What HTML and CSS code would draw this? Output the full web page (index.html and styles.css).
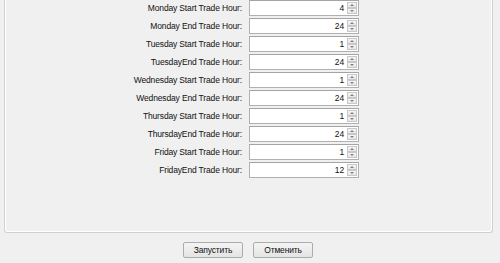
FILE: index.html
```html
<!DOCTYPE html>
<html lang="en">
<head>
  <meta charset="UTF-8">
  <title>Trade Hours</title>
  <link rel="stylesheet" href="styles.css">
</head>
<body>
  <div class="group">
    <div class="rows">
      <label>Monday Start Trade Hour:</label>
      <div class="spin"><span class="val">4</span><span class="arrows"><i class="up"></i><i class="down"></i></span></div>
      <label>Monday End Trade Hour:</label>
      <div class="spin"><span class="val">24</span><span class="arrows"><i class="up"></i><i class="down"></i></span></div>
      <label>Tuesday Start Trade Hour:</label>
      <div class="spin"><span class="val">1</span><span class="arrows"><i class="up"></i><i class="down"></i></span></div>
      <label>TuesdayEnd Trade Hour:</label>
      <div class="spin"><span class="val">24</span><span class="arrows"><i class="up"></i><i class="down"></i></span></div>
      <label>Wednesday Start Trade Hour:</label>
      <div class="spin"><span class="val">1</span><span class="arrows"><i class="up"></i><i class="down"></i></span></div>
      <label>Wednesday End Trade Hour:</label>
      <div class="spin"><span class="val">24</span><span class="arrows"><i class="up"></i><i class="down"></i></span></div>
      <label>Thursday Start Trade Hour:</label>
      <div class="spin"><span class="val">1</span><span class="arrows"><i class="up"></i><i class="down"></i></span></div>
      <label>ThursdayEnd Trade Hour:</label>
      <div class="spin"><span class="val">24</span><span class="arrows"><i class="up"></i><i class="down"></i></span></div>
      <label>Friday Start Trade Hour:</label>
      <div class="spin"><span class="val">1</span><span class="arrows"><i class="up"></i><i class="down"></i></span></div>
      <label>FridayEnd Trade Hour:</label>
      <div class="spin"><span class="val">12</span><span class="arrows"><i class="up"></i><i class="down"></i></span></div>
    </div>
  </div>

  <div class="buttons">
    <button>Запустить</button>
    <button>Отменить</button>
  </div>
</body>
</html>
```

FILE: styles.css
```css
* {
  box-sizing: border-box;
  margin: 0;
  padding: 0;
}

body {
  background: #f0f0f0;
  font-family: "Liberation Sans", Arial, sans-serif;
  font-size: 8.5px;
  letter-spacing: -0.15px;
  color: #111;
}

/* group box, top edge scrolled out of view */
.group {
  height: 233px;
  margin: 0 7px 0 4px;
  border: 1px solid #d0d0d0;
  border-top: none;
  border-radius: 0 0 3px 3px;
  box-shadow: inset 1px 0 #fff, inset -1px 0 #fff, inset 0 -1px #fff;
}

.rows {
  display: grid;
  grid-template-columns: 238px 110px;
  column-gap: 6px;
  row-gap: 2px;
}

.rows label {
  height: 16px;
  line-height: 16px;
  text-align: right;
  padding-right: 1px;
}

.spin {
  display: flex;
  height: 16px;
  background: #fff;
  border: 1px solid #b0b0b0;
  border-top-color: #a4a4a4;
}

.val {
  flex: 1;
  text-align: right;
  line-height: 14px;
  padding-right: 3px;
}

.arrows {
  width: 11px;
  display: flex;
  flex-direction: column;
  padding: 1px 1px 1px 0;
}

.arrows i {
  flex: 1;
  display: flex;
  align-items: center;
  justify-content: center;
  background: linear-gradient(#f6f6f6, #e6e6e6);
  border: 1px solid #c8c8c8;
}

.arrows i::after {
  content: "";
  border-left: 2px solid transparent;
  border-right: 2px solid transparent;
}

.arrows .up::after { border-bottom: 2px solid #808080; }
.arrows .down::after { border-top: 2px solid #808080; }

.buttons {
  display: flex;
  justify-content: center;
  gap: 10px;
  margin-top: 9px;
  padding-right: 4px;
}

button {
  width: 60px;
  height: 16px;
  font-family: inherit;
  font-size: 8.5px;
  letter-spacing: -0.15px;
  color: #111;
  background: linear-gradient(#f4f4f4, #e4e4e4);
  border: 1px solid #acacac;
  border-radius: 2px;
}
```
